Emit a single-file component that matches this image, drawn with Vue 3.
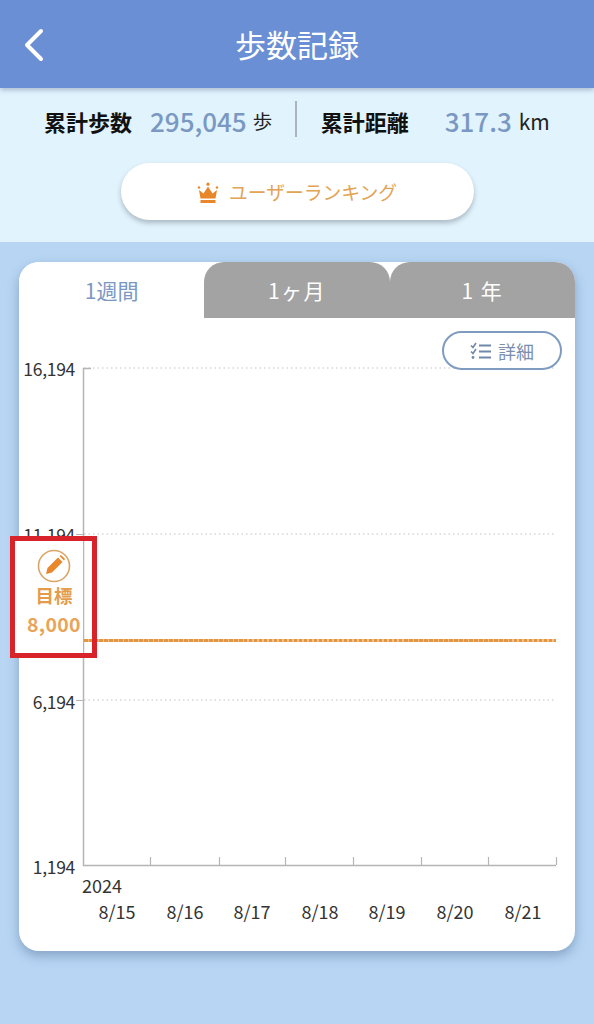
<script setup>
const tabs = [
  { label: '1週間', active: true },
  { label: '1ヶ月', active: false },
  { label: '1 年', active: false },
];
const yLabels = [
  { text: '16,194', y: 376 },
  { text: '11,194', y: 542 },
  { text: '6,194', y: 709 },
  { text: '1,194', y: 874 },
];
const gridLines = [368, 534, 700];
const ticks = [150, 219, 285, 353, 421, 488, 556];
const dates = [
  { text: '8/15', x: 117 },
  { text: '8/16', x: 185 },
  { text: '8/17', x: 252 },
  { text: '8/18', x: 320 },
  { text: '8/19', x: 387 },
  { text: '8/20', x: 455 },
  { text: '8/21', x: 523 },
];
</script>

<template>
  <div class="page">
    <header class="topbar">
      <svg class="back" width="24" height="36" viewBox="0 0 24 36">
        <path d="M19 4 5 18l14 14" fill="none" stroke="#fff" stroke-width="4" stroke-linecap="round" stroke-linejoin="round" />
      </svg>
      <h1>歩数記録</h1>
    </header>

    <section class="summary">
      <div class="stats">
        <div class="stat stat-steps">
          <b>累計歩数</b>
          <span class="num">295,045</span>
          <span class="unit">歩</span>
        </div>
        <i class="divider"></i>
        <div class="stat stat-dist">
          <b>累計距離</b>
          <span class="num">317.3</span>
          <span class="unit">km</span>
        </div>
      </div>
      <button class="ranking">
        <svg width="22" height="22" viewBox="0 0 22 22">
          <circle cx="11" cy="2.2" r="1.6" fill="#e8862a" />
          <circle cx="2" cy="5.5" r="1.2" fill="#e8862a" />
          <circle cx="20" cy="5.5" r="1.2" fill="#e8862a" />
          <path d="M2 8l4.500 3.500L11 4.500l4.500 7L20 8l-1.500 8.500h-15z" fill="#e8862a" />
          <rect x="3.500" y="18" width="15" height="3" fill="#e8862a" />
        </svg>
        <span>ユーザーランキング</span>
      </button>
    </section>

    <main class="content">
      <div class="card">
        <div class="tabs">
          <div v-for="t in tabs" :key="t.label" class="tab" :class="{ active: t.active }">{{ t.label }}</div>
        </div>
        <div class="chart">
          <svg class="plot" width="556" height="633" viewBox="19 318 556 633">
            <line v-for="y in gridLines" :key="y" x1="84" :y1="y" x2="556" :y2="y" stroke="#d6d6d6" stroke-width="1.500" stroke-dasharray="1.500 3" />
            <path d="M91 368.500H83.500V865.500H556" fill="none" stroke="#b5b5b5" stroke-width="1.500" />
            <line x1="76" y1="534.500" x2="83" y2="534.500" stroke="#b5b5b5" />
            <line x1="76" y1="700.500" x2="83" y2="700.500" stroke="#b5b5b5" />
            <line v-for="x in ticks" :key="x" :x1="x + 0.5" y1="857" :x2="x + 0.5" y2="865" stroke="#b5b5b5" stroke-width="1.200" />
            <text v-for="l in yLabels" :key="l.text" x="75" :y="l.y" text-anchor="end" class="tick-label y-label">{{ l.text }}</text>
            <text x="82" y="893" class="tick-label">2024</text>
            <text v-for="d in dates" :key="d.text" :x="d.x" y="919" text-anchor="middle" class="tick-label">{{ d.text }}</text>
          </svg>

          <button class="detail">
            <svg width="22" height="18" viewBox="0 0 22 18">
              <path d="M1 3.500l2 2L6 1M1 9.500l2 2 3-4.500" fill="none" stroke="#6f87a8" stroke-width="1.600" />
              <circle cx="3" cy="15.500" r="1.400" fill="#6f87a8" />
              <path d="M9 3.500h12M9 9.500h12M9 15.500h12" stroke="#6f87a8" stroke-width="2" />
            </svg>
            <span>詳細</span>
          </button>

          <div class="goal">
            <svg width="34" height="34" viewBox="0 0 34 34">
              <circle cx="17" cy="17" r="15.500" fill="#fff" stroke="#d9a566" stroke-width="1.600" />
              <path d="M9 25l1.500-6L21 8.500l4.500 4.500L15 23.500z" fill="#e8872c" />
              <path d="M22.500 7l1.500-1 4 4-1 1.500z" fill="#e8872c" />
            </svg>
            <strong class="goal-label">目標</strong>
            <strong class="goal-value">8,000</strong>
          </div>
          <div class="goal-line"></div>
          <div class="highlight"></div>
        </div>
      </div>
    </main>
  </div>
</template>

<style>
html, body { margin: 0; background: #b8d6f4; }
</style>

<style scoped>
.page {
  width: 594px;
  height: 1024px;
  overflow: hidden;
  background: #b8d6f4;
  font-family: "Noto Sans CJK JP", "Noto Sans", sans-serif;
  display: flex;
  flex-direction: column;
}

.topbar {
  height: 88px;
  background: #6a8fd4;
  box-shadow: 0 2px 5px rgba(60, 80, 120, 0.35);
  position: relative;
  z-index: 2;
  display: flex;
  align-items: center;
  justify-content: center;
  flex-shrink: 0;
}
.back { position: absolute; left: 22px; top: 27px; }
.topbar h1 {
  margin: 0 0 1px;
  font-size: 31px;
  font-weight: 400;
  color: #fff;
  line-height: 1;
}

.summary {
  height: 154px;
  background: #e1f3fd;
  display: flex;
  flex-direction: column;
  align-items: center;
  flex-shrink: 0;
}
.stats {
  width: 100%;
  height: 36px;
  margin-top: 13px;
  display: flex;
  align-items: center;
  padding-left: 44px;
  box-sizing: border-box;
}
.stat { display: flex; align-items: center; line-height: 1; position: relative; top: 2px; }
.stat b { font-size: 22px; font-weight: 700; color: #111; }
.num { font-size: 26px; font-weight: 500; color: #7a98c2; }
.unit { font-size: 19.500px; color: #222; }
.stat-steps .num { margin-left: 18px; }
.stat-steps .unit { margin-left: 6px; }
.divider { width: 1.500px; height: 36px; background: #a9b4bd; margin: 0 24px 0 23px; }
.stat-dist .num { margin-left: 36px; }
.stat-dist .unit { margin-left: 7px; font-size: 21px; }

.ranking {
  margin-top: 26px;
  width: 353px;
  height: 57px;
  border: 0;
  border-radius: 29px;
  background: #fff;
  box-shadow: 0 3px 5px rgba(90, 100, 110, 0.4);
  display: flex;
  align-items: center;
  justify-content: center;
  gap: 10px;
  padding: 2px 0 0;
  font-family: inherit;
}
.ranking span { font-size: 18.800px; color: #e2a455; line-height: 1; }

.content { padding: 20px 19px 0; }
.card {
  width: 556px;
  height: 689px;
  background: #fff;
  border-radius: 20px;
  box-shadow: 0 5px 12px rgba(70, 100, 140, 0.45);
  display: flex;
  flex-direction: column;
}
.tabs { display: flex; height: 56px; flex-shrink: 0; }
.tab {
  flex: 1;
  display: flex;
  align-items: center;
  justify-content: center;
  box-sizing: border-box;
  background: #a3a3a3;
  color: #fff;
  font-size: 21px;
  letter-spacing: 1.500px;
  border-radius: 20px 20px 0 0;
}
.tab.active { background: #fff; color: #7a98c2; letter-spacing: 0; }

.chart { position: relative; flex: 1; }
.plot { display: block; }
.tick-label {
  font-size: 18px;
  fill: #333;
  font-family: "Noto Sans CJK JP", "Noto Sans", sans-serif;
}
.y-label { font-size: 17.500px; letter-spacing: -0.3px; }

.detail {
  position: absolute;
  left: 423px;
  top: 13px;
  width: 120px;
  height: 39px;
  border: 2px solid #7f9cc0;
  border-radius: 20px;
  background: #fff;
  display: flex;
  align-items: center;
  justify-content: center;
  gap: 6px;
  padding: 0;
  font-family: inherit;
  font-size: 18px;
  color: #7a8fae;
}

.goal {
  position: absolute;
  left: -8px;
  top: 222px;
  width: 72px;
  height: 114px;
  padding: 9px 0 0 14px;
  box-sizing: border-box;
  display: flex;
  flex-direction: column;
  align-items: center;
  background: #fff;
}
.goal-label { font-size: 18.500px; line-height: 1; color: #e39c4b; margin-top: 3px; }
.goal-value { font-size: 19.500px; line-height: 1; color: #e8a55a; margin-top: 9px; letter-spacing: 0.300px; }

.goal-line {
  position: absolute;
  left: 65px;
  top: 321px;
  width: 472px;
  height: 3px;
  background: repeating-linear-gradient(90deg, #e2963f 0 3.500px, #f1c08a 3.500px 5px);
}

.highlight {
  position: absolute;
  left: -9px;
  top: 218px;
  width: 87px;
  height: 122px;
  border: 5px solid #d9232b;
  box-sizing: border-box;
}
</style>
